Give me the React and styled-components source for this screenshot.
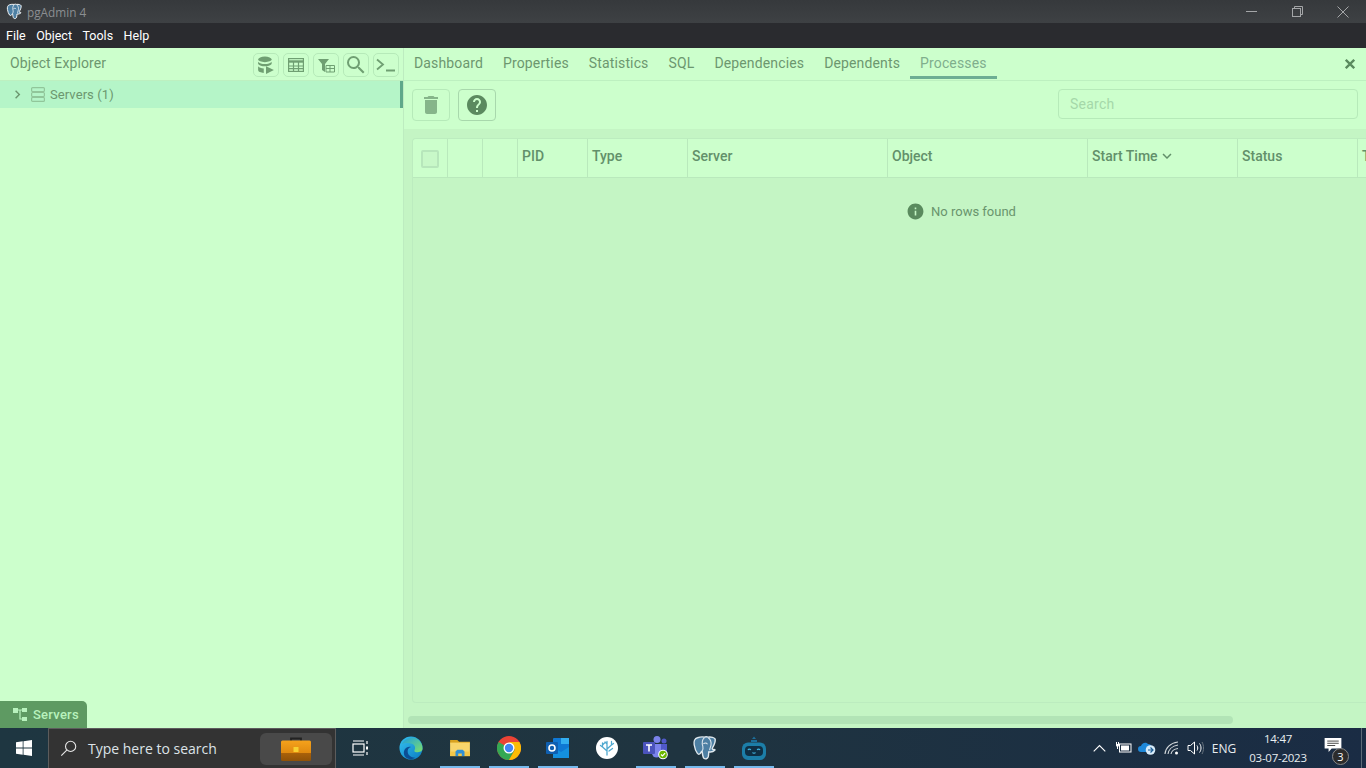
import React from "react";
import styled, { createGlobalStyle } from "styled-components";
import { MdDelete, MdHelp, MdSearch, MdInfo, MdKeyboardArrowRight, MdExpandMore } from "react-icons/md";

const Global = createGlobalStyle`
  html, body { margin: 0; padding: 0; overflow: hidden; }
  * { box-sizing: border-box; }
  #root { width: 1366px; height: 768px; }
`;

const Page = styled.div`
  width: 1366px; height: 768px; display: flex; flex-direction: column;
  font-family: Roboto, "Liberation Sans", sans-serif; overflow: hidden; background: #ccffcc;
`;
const TitleBar = styled.div`
  height: 23px; flex: none; display: flex; align-items: center;
  background: linear-gradient(#36393c, #3e4144); padding-left: 6px;
`;
const TitleText = styled.span`
  font-size: 11.8px; color: #8b8e91; margin-left: 4px;
  font-family: "Open Sans", sans-serif;
`;
const WinButtons = styled.div`margin-left: auto; display: flex; align-items: center; color: #a4a6a8;`;
const WinButton = styled.div`width: 46px; height: 23px; display: flex; align-items: center; justify-content: center;`;
const MenuBar = styled.div`
  height: 25px; flex: none; background: #2a2b2f; display: flex; align-items: center; padding-left: 6px; gap: 10.5px;
`;
const MenuItem = styled.span`color: #fff; font-size: 12.5px;`;
const Main = styled.div`flex: 1; min-height: 0; display: flex; position: relative;`;
const LeftPanel = styled.div`
  width: 404px; flex: none; border-right: 1px solid #bdecc0; display: flex; flex-direction: column; background: #ccffcc;
`;
const PanelHeader = styled.div`
  height: 33px; flex: none; display: flex; align-items: center; padding: 2px 4px 0 10px;
  border-bottom: 1px solid #bdf0c0; justify-content: space-between;
`;
const PanelTitle = styled.span`font-size: 14px; color: #6c976f; letter-spacing: .1px; margin-bottom: 4px;`;
const SmallTools = styled.div`display: flex; gap: 4px;`;
const SmallTool = styled.div`
  width: 26px; height: 24px; border: 1px solid #b6eab9; border-radius: 5px; display: flex;
  align-items: center; justify-content: center; color: #6f9f72;
`;
const TreeRow = styled.div`
  height: 27px; flex: none; background: #b5f5c8; border-right: 3px solid #5fa88a; display: flex; align-items: center;
  padding-left: 9px; color: #6c976f; font-size: 13px; gap: 5px;
`;
const TreeLabel = styled.span`letter-spacing: .08px;`;
const LeftSpacer = styled.div`flex: 1;`;
const BrowserTab = styled.div`
  position: absolute; left: 0; bottom: 0; width: 87px; height: 27px; background: #5e9a62; border-radius: 0 5px 0 0;
  display: flex; align-items: center; padding-left: 13px; gap: 6px; color: #b8f2bd; font-size: 13px; font-weight: 500; letter-spacing: .25px;
`;
const RightPanel = styled.div`flex: 1; min-width: 0; display: flex; flex-direction: column;`;
const TabBar = styled.div`
  height: 33px; flex: none; display: flex; border-bottom: 1px solid #bdf0c0; position: relative;
`;
const Tab = styled.div`
  height: 31px; padding: 1px 10px 0; display: flex; align-items: center; font-size: 14px; letter-spacing: .14px;
  color: ${p => (p.$active ? "#7fae8c" : "#6c976f")};
  border-bottom: ${p => (p.$active ? "3px solid #6dae93" : "3px solid transparent")};
`;
const TabClose = styled.div`
  position: absolute; right: 11px; top: 11px; color: #5a8a5e; display: flex;
`;
const Toolbar = styled.div`
  height: 48px; flex: none; display: flex; align-items: flex-start; padding: 8px 8px 0; gap: 8px;
`;
const ToolButton = styled.div`
  width: 38px; height: 32px; border: 1px solid ${p => (p.$on ? "#a8d8ac" : "#b6eab9")}; border-radius: 4px;
  display: flex; align-items: center; justify-content: center; color: ${p => (p.$on ? "#5b8a5f" : "#86b58a")};
`;
const SearchBox = styled.div`
  margin-left: auto; width: 300px; height: 30px; border: 1px solid #b6eab9; border-radius: 4px;
  display: flex; align-items: center; padding-left: 11px; font-size: 14px; color: #a5d8a9; letter-spacing: .25px;
`;
const GridArea = styled.div`
  flex: 1; min-height: 0; background: #c4f5c4; padding: 9px 0 0 8px; display: flex; flex-direction: column; overflow: hidden;
`;
const Table = styled.div`
  flex: 1; min-height: 0; border: 1px solid #bcecbf; border-right: none; border-radius: 4px 0 0 4px; display: flex; flex-direction: column; overflow: hidden;
`;
const HeadRow = styled.div`
  height: 39px; flex: none; display: flex; background: #ccffcc; border-bottom: 1px solid #b9e9bc;
`;
const HeadCell = styled.div`
  flex: none; width: ${p => p.$w}px; display: flex; align-items: center; padding-left: 4px; font-size: 14px; font-weight: 500;
  color: #62906a; border-right: 1px solid #b9e9bc; white-space: nowrap; overflow: hidden;
`;
const HeadLabel = styled.span`display: flex; align-items: center; padding-bottom: 4px;`;
const Check = styled.div`
  width: 18px; height: 18px; margin: 1px 0 0 4px; border: 2px solid #b7e6bb; border-radius: 2px; background: #c8f8c8;
`;
const Empty = styled.div`
  display: flex; align-items: center; justify-content: center; gap: 6px; height: 67px; color: #69946d; font-size: 13px;
  width: 1096px;
`;
const ScrollTrack = styled.div`height: 25px; flex: none; display: flex; align-items: flex-start; padding-top: 13px; margin-left: -4px;`;
const ScrollThumb = styled.div`width: 825px; height: 8px; border-radius: 4px; background: #b2e4b6;`;
const Taskbar = styled.div`
  height: 40px; flex: none; display: flex; align-items: stretch; color: #fff;
  background: linear-gradient(90deg, #1e3641, #1f3440 50%, #1a2c44);
`;
const StartButton = styled.div`width: 48px; display: flex; align-items: center; justify-content: center;`;
const SearchBar = styled.div`
  width: 288px; background: #333; border: 1px solid #5c5c5c; border-bottom: none; display: flex; align-items: center; padding: 0 3px 0 11px;
`;
const SearchText = styled.span`
  font-family: "Open Sans", sans-serif; font-size: 14px; color: #dde3e8; margin-left: 11px;
`;
const Badge = styled.div`
  margin-left: auto; width: 72px; height: 32px; border-radius: 6px; background: #494949; display: flex; align-items: center; justify-content: center;
`;
const AppSlot = styled.div`
  width: ${p => p.$w || 49}px; position: relative; display: flex; align-items: center; justify-content: center;
  ${p => p.$open && `&::after { content: ""; position: absolute; bottom: 0; left: 5px; right: 4px; height: 2px; background: #76b9ed; }`}
`;
const Tray = styled.div`margin-left: auto; display: flex; align-items: stretch;`;
const TrayIcon = styled.div`width: ${p => p.$w || 24}px; display: flex; align-items: center; justify-content: center;`;
const TrayLang = styled.div`width: 32px; margin: 0 8px 0 2px; display: flex; align-items: center; justify-content: center; font-size: 12px; font-family: "Open Sans", sans-serif; color: #e8edf0;`;
const Clock = styled.div`
  width: 60px; display: flex; flex-direction: column; align-items: center; justify-content: center; font-size: 11.5px; line-height: 19px; font-family: "Open Sans", sans-serif; color: #e8edf0; letter-spacing: -.25px; margin-right: 2px; white-space: nowrap;
`;
const Notify = styled.div`width: 46px; position: relative; display: flex; align-items: center; justify-content: center;`;
const NotifyCount = styled.div`
  position: absolute; left: 22px; top: 20px; width: 17px; height: 17px; border-radius: 50%; background: #2c2c2c; border: 1px solid #888; color: #fff; font-size: 11px;
  display: flex; align-items: center; justify-content: center; font-family: "Open Sans", sans-serif;
`;
const ShowDesktop = styled.div`width: 10px; &::before { content: ""; display: block; width: 1px; height: 40px; margin-left: 5px; background: #5c6b78; }`;

const Elephant = ({ size = 20, fill = "#336791", line = "#fff" }) => (
  <svg width={size} height={size} viewBox="0 0 24 24">
    <path d="M5 2.5C2.5 3 1.5 6 2 9c.5 3 1.5 6 3 8 1 1.2 2.3.8 3-.5.6-1 .8-1.6 1.4-1.2.3 2.5.4 5 1.6 6.2 1.3 1 3.3.6 4-1.5.4-1.5.3-3 .5-4.5 2 .4 4.3-.2 5.5-1.4.5-.6-.2-1-1.2-.8-1 .1-1.3-.4-1-1.3 1.3-2.2 3-5.5 2.6-8.2C20.800 2.500 17.500 1.500 15 2c-1-.4-2.500-.6-3.500 0C9.500 1.500 7 1.900 5 2.500z" fill={fill} stroke={line} strokeWidth="1.3" strokeLinejoin="round" />
    <path d="M11.500 2.500c-2 1.800-2.500 5-1.500 8 .4 1.500.2 3-.7 4.500M15 2.500c2 1.500 3 4 2.500 7-.3 1.700-1.200 2.800-1.200 4.500M10.500 8c1.500-.8 3-.6 3.800.5" fill="none" stroke={line} strokeWidth="1" />
  </svg>
);

const Windows = () => (
  <svg width="16" height="16" viewBox="0 0 16 16" fill="#fff">
    <path d="M0 2.300l6.700-1v6.300H0zM7.500 1.200L16 0v7.600H7.500zM0 8.400h6.700v6.300l-6.700-1zM7.500 8.400H16V16l-8.500-1.200z" />
  </svg>
);

const Briefcase = () => (
  <svg width="30" height="24" viewBox="0 0 30 24">
    <defs>
      <linearGradient id="caseFill" x1="0" y1="0" x2="0" y2="1">
        <stop offset="0" stopColor="#f5a21c" />
        <stop offset=".6" stopColor="#e08a10" />
        <stop offset=".62" stopColor="#a9610a" />
        <stop offset="1" stopColor="#8f5208" />
      </linearGradient>
    </defs>
    <path d="M10 4V1.500h10V4" fill="none" stroke="#222" strokeWidth="1.800" />
    <rect x="0" y="3.500" width="30" height="20.500" rx="1.500" fill="url(#caseFill)" />
    <rect x="12.500" y="10" width="5" height="5" fill="#f8d030" />
  </svg>
);

const EdgeIcon = () => (
  <svg width="24" height="24" viewBox="0 0 26 26">
    <defs>
      <linearGradient id="edgeA" x1="0" y1="0" x2="1" y2="1"><stop offset="0" stopColor="#35c1f1" /><stop offset="1" stopColor="#0a7cc1" /></linearGradient>
      <linearGradient id="edgeB" x1="0" y1="0" x2="1" y2="1"><stop offset="0" stopColor="#1b9de2" /><stop offset="1" stopColor="#7fe06a" /></linearGradient>
    </defs>
    <circle cx="13" cy="13" r="12.500" fill="url(#edgeA)" />
    <path d="M3 9C6 2 15 0 21 4c3 2.500 4.500 6 4.500 9.500 0 3-3 4-6.500 4-2 0-3-1-2-2.500 1-2 .5-5-3-6.500C10 7 6 7.500 3 9z" fill="url(#edgeB)" />
    <path d="M11 25c-5-1-7-6-5-10 1.500-3 5-4 7-3-3 1-4 3-3.500 6 .5 3 3.500 5.500 8 5.500-2 1.300-4.500 2-6.500 1.500z" fill="#0b4e94" />
  </svg>
);
const FolderIcon = () => (
  <svg width="22" height="18" viewBox="0 0 24 20">
    <path d="M1 1h8l2 2h12v2H1z" fill="#d9a21f" />
    <rect x="1" y="4" width="22" height="15" fill="#f8d56b" />
    <rect x="1" y="14" width="22" height="5" fill="#f3c648" />
    <path d="M7 19v-5l2-2h6l2 2v5h-3v-3h-4v3z" fill="#2f8fd6" />
  </svg>
);
const ChromeIcon = () => (
  <svg width="24" height="24" viewBox="0 0 24 24">
    <circle cx="12" cy="12" r="12" fill="#ea4335" />
    <path d="M12 12L1.600 6A12 12 0 0 0 12 24l6-10.400z" fill="#34a853" />
    <path d="M12 6h10.400A12 12 0 0 1 12 24l6-10.400z" fill="#fbbc04" />
    <circle cx="12" cy="12" r="5.500" fill="#fff" />
    <circle cx="12" cy="12" r="4.200" fill="#4285f4" />
  </svg>
);
const OutlookIcon = () => (
  <svg width="24" height="22" viewBox="0 0 24 22">
    <rect x="7" y="1" width="16" height="20" rx="1" fill="#0f78d4" />
    <rect x="15" y="1" width="8" height="6" fill="#33aef0" />
    <path d="M7 10l8 5 8-5v11H7z" fill="#1490df" />
    <rect x="0" y="5" width="12" height="12" rx="1" fill="#0f5fb0" />
    <circle cx="6" cy="11" r="3" fill="none" stroke="#fff" strokeWidth="1.600" />
  </svg>
);
const CoralIcon = () => (
  <svg width="22" height="22" viewBox="0 0 22 22">
    <circle cx="11" cy="11" r="11" fill="#fff" />
    <path d="M11 18V9M11 14L6.500 10V6M6.500 10L4.500 8.500M6.500 8L8.500 6M11 12l4.500-4V4.500M15.500 8l2-1.500M11 9V4.500M11 7L9 5M13 14l3.500-2.500" fill="none" stroke="#4fa8cf" strokeWidth="1.300" strokeLinecap="round" />
  </svg>
);
const TeamsIcon = () => (
  <svg width="26" height="24" viewBox="0 0 26 24">
    <circle cx="14" cy="3.500" r="3.500" fill="#7b83eb" />
    <circle cx="21" cy="5" r="2.500" fill="#5059c9" />
    <path d="M9 8h9v9a4.500 4.500 0 0 1-9 0z" fill="#7b83eb" />
    <path d="M18 8h6v6a3 3 0 0 1-6 0z" fill="#5059c9" />
    <rect x="0" y="6" width="12" height="12" rx="1" fill="#4b53bc" />
    <path d="M3 9h6M6 9v6.500" stroke="#fff" strokeWidth="1.600" />
    <circle cx="20" cy="18.500" r="4.800" fill="#fff" />
    <circle cx="20" cy="18.500" r="3.800" fill="#6bb700" />
    <path d="M18 18.500l1.500 1.500 2.600-2.800" stroke="#fff" strokeWidth="1.200" fill="none" />
  </svg>
);
const RobotIcon = () => (
  <svg width="24" height="26" viewBox="0 0 24 26">
    <path d="M10 4l2-2.500L14 4z" fill="#1c6f9b" />
    <rect x="9" y="5" width="6" height="2" fill="#1c6f9b" />
    <rect x="0" y="7.500" width="24" height="17.500" rx="6" fill="#1c7ea8" />
    <rect x="3" y="11" width="18" height="10" rx="4" fill="#0f2f44" />
    <path d="M6 15c.6-1.200 2-1.200 2.800 0M15.200 15c.6-1.200 2-1.200 2.800 0" stroke="#3fb5e0" strokeWidth="1.300" fill="none" />
    <path d="M10.500 17.500c.6 1 2.400 1 3 0" stroke="#3fb5e0" strokeWidth="1.200" fill="none" />
  </svg>
);

const columns = [
  { w: 35, check: true }, { w: 35 }, { w: 35 }, { w: 70, t: "PID" }, { w: 100, t: "Type" },
  { w: 200, t: "Server" }, { w: 200, t: "Object" }, { w: 150, t: "Start Time", sort: true },
  { w: 120, t: "Status" }, { w: 100, t: "T" },
];
const tabs = ["Dashboard", "Properties", "Statistics", "SQL", "Dependencies", "Dependents", "Processes"];

export default function App() {
  return (
    <Page>
      <Global />
      <TitleBar>
        <Elephant size={17} fill="#4d7fa3" />
        <TitleText>pgAdmin 4</TitleText>
        <WinButtons>
          <WinButton><svg width="11" height="11" viewBox="0 0 11 11"><path d="M0 5.500h11" stroke="currentColor" /></svg></WinButton>
          <WinButton><svg width="11" height="11" viewBox="0 0 11 11" fill="none" stroke="currentColor"><rect x=".5" y="2.500" width="8" height="8" /><path d="M2.500 2.500V.5h8v8h-2" /></svg></WinButton>
          <WinButton><svg width="12" height="12" viewBox="0 0 12 12"><path d="M.5.5l11 11M11.500.5l-11 11" stroke="currentColor" /></svg></WinButton>
        </WinButtons>
      </TitleBar>
      <MenuBar>
        {["File", "Object", "Tools", "Help"].map(m => <MenuItem key={m}>{m}</MenuItem>)}
      </MenuBar>
      <Main>
        <LeftPanel>
          <PanelHeader>
            <PanelTitle>Object Explorer</PanelTitle>
            <SmallTools>
              <SmallTool>
                <svg width="18" height="18" viewBox="0 0 16 16" fill="currentColor">
                  <ellipse cx="7" cy="3" rx="6" ry="2.500" />
                  <path d="M1 5c1 1.500 3.500 2 6 2s5-.5 6-2v2c-1 1.500-3.500 2-6 2s-5-.5-6-2zM1 9c1 1.200 2.500 1.800 5 2v4c-2.500 0-5-1-5-2.500z" />
                  <path d="M8 9l7 3.500L8 16z" />
                </svg>
              </SmallTool>
              <SmallTool>
                <svg width="16" height="14" viewBox="0 0 16 14" fill="none" stroke="currentColor" strokeWidth="1.200">
                  <rect x=".6" y=".6" width="14.800" height="12.800" />
                  <path d="M.6 3.500h14.800" strokeWidth="2.400" />
                  <path d="M.6 8h14.800M.6 10.700h14.800M5.500 3v10M10.500 3v10" />
                </svg>
              </SmallTool>
              <SmallTool>
                <svg width="17" height="15" viewBox="0 0 17 15" fill="currentColor">
                  <path d="M0 1h11L7 6v8L4 12V6z" />
                  <path d="M8 7.500h8.500V14H8z" fill="none" stroke="currentColor" />
                  <path d="M8 10.500h8.500M12 7.500V14" stroke="currentColor" />
                </svg>
              </SmallTool>
              <SmallTool><MdSearch size={24} /></SmallTool>
              <SmallTool>
                <svg width="20" height="14" viewBox="0 0 20 14" fill="none" stroke="currentColor" strokeWidth="1.800">
                  <path d="M1 1.500L7 6.500 1 11.500M10 12.500h9" />
                </svg>
              </SmallTool>
            </SmallTools>
          </PanelHeader>
          <TreeRow>
            <MdKeyboardArrowRight size={17} />
            <svg width="14" height="15" viewBox="0 0 14 15" fill="none" stroke="#91c69a" strokeWidth="1.200">
              <rect x=".6" y=".6" width="12.800" height="4" rx="1" />
              <rect x=".6" y="5.500" width="12.800" height="4" rx="1" />
              <rect x=".6" y="10.400" width="12.800" height="4" rx="1" />
            </svg>
            <TreeLabel>Servers (1)</TreeLabel>
          </TreeRow>
          <LeftSpacer />
        </LeftPanel>
        <BrowserTab>
          <svg width="14" height="13" viewBox="0 0 14 13" fill="currentColor">
            <rect x="0" y="0" width="5" height="5" />
            <rect x="9" y="0" width="5" height="4" />
            <rect x="9" y="9" width="5" height="4" />
            <path d="M5 2h4M7 2v9h2" fill="none" stroke="currentColor" strokeWidth="1.200" />
          </svg>
          Servers
        </BrowserTab>
        <RightPanel>
          <TabBar>
            {tabs.map(t => <Tab key={t} $active={t === "Processes"}>{t}</Tab>)}
            <TabClose>
              <svg width="10" height="10" viewBox="0 0 10 10" fill="none" stroke="currentColor" strokeWidth="2.300">
                <path d="M.8.8l8.400 8.400M9.200.8L.8 9.200" />
              </svg>
            </TabClose>
          </TabBar>
          <Toolbar>
            <ToolButton><MdDelete size={24} /></ToolButton>
            <ToolButton $on><MdHelp size={24} /></ToolButton>
            <SearchBox>Search</SearchBox>
          </Toolbar>
          <GridArea>
            <Table>
              <HeadRow>
                {columns.map((c, i) => (
                  <HeadCell key={i} $w={c.w}>
                    {c.check && <Check />}
                    {c.t && (
                      <HeadLabel>
                        {c.t}
                        {c.sort && <MdExpandMore size={18} />}
                      </HeadLabel>
                    )}
                  </HeadCell>
                ))}
              </HeadRow>
              <Empty><MdInfo size={19} color="#5a8a5e" /> No rows found</Empty>
            </Table>
            <ScrollTrack><ScrollThumb /></ScrollTrack>
          </GridArea>
        </RightPanel>
      </Main>
      <Taskbar>
        <StartButton><Windows /></StartButton>
        <SearchBar>
          <svg width="17" height="17" viewBox="0 0 20 20" fill="none" stroke="#e6e6e6" strokeWidth="1.300">
            <circle cx="12.500" cy="7.500" r="6" />
            <path d="M8 12l-6.500 6.500" />
          </svg>
          <SearchText>Type here to search</SearchText>
          <Badge><Briefcase /></Badge>
        </SearchBar>
        <AppSlot $w={50}>
          <svg width="16" height="16" viewBox="0 0 16 16" fill="none" stroke="#fff" strokeWidth="1.200" style={{ marginRight: 2 }}>
            <rect x="1" y="4" width="11" height="8" />
            <path d="M1 1h11M1 15h11M15 1v3M15 12v3" />
            <rect x="14" y="6.500" width="2" height="3" fill="#fff" stroke="none" />
          </svg>
        </AppSlot>
        <AppSlot><EdgeIcon /></AppSlot>
        <AppSlot $open><FolderIcon /></AppSlot>
        <AppSlot $open><ChromeIcon /></AppSlot>
        <AppSlot $open><OutlookIcon /></AppSlot>
        <AppSlot><CoralIcon /></AppSlot>
        <AppSlot $open><TeamsIcon /></AppSlot>
        <AppSlot $open><Elephant size={26} fill="#4d7fa3" line="#dfe8ee" /></AppSlot>
        <AppSlot $open><RobotIcon /></AppSlot>
        <Tray>
          <TrayIcon>
            <svg width="13" height="8" viewBox="0 0 13 8" fill="none" stroke="#fff" strokeWidth="1.100"><path d="M.7 7.300L6.500 1.500l5.800 5.800" /></svg>
          </TrayIcon>
          <TrayIcon>
            <svg width="17" height="12" viewBox="0 0 17 12" fill="#fff">
              <rect x="4.500" y="2" width="11.500" height="8" fill="none" stroke="#fff" />
              <rect x="6" y="3.500" width="8" height="5" />
              <path d="M1 0h1v2h1V0h1v3.500L3 5v2H2V5L1 3.500z" />
            </svg>
          </TrayIcon>
          <TrayIcon>
            <svg width="18" height="14" viewBox="0 0 18 14">
              <path d="M3 11a3 3 0 0 1 0-6c.5-3 5-4.500 7-2 2 0 3.500 1 3.500 3l-2 5z" fill="#1e88d9" />
              <circle cx="12.500" cy="9" r="4.800" fill="#d8ecfa" />
              <path d="M10 9h5M12.500 6.500l2.500 2.500-2.500 2.500" stroke="#1e5f96" strokeWidth="1.200" fill="none" />
            </svg>
          </TrayIcon>
          <TrayIcon $w={25}>
            <svg width="16" height="14" viewBox="0 0 16 14" fill="none" stroke="#d4d9dc" strokeWidth="1.100">
              <path d="M1 13C1.500 7 6 2 14 1M4 13c.5-4 4-8 10-9M7 13c.5-2.500 3-5 7-5.500" />
              <circle cx="12.500" cy="12" r="1.500" fill="#fff" stroke="none" />
            </svg>
          </TrayIcon>
          <TrayIcon $w={22}>
            <svg width="17" height="14" viewBox="0 0 17 14" fill="none" stroke="#fff" strokeWidth="1">
              <path d="M1 4.500h2.500L7.500 1v12L3.500 9.500H1z" />
              <path d="M10 4.500c1 1.500 1 3.500 0 5M12.500 2.500c2 2.500 2 6.500 0 9" />
              <path d="M15 1c2 3.500 2 8.500 0 12" stroke="#6a7680" />
            </svg>
          </TrayIcon>
          <TrayLang>ENG</TrayLang>
          <Clock><span>14:47</span><span>03-07-2023</span></Clock>
          <Notify>
            <svg width="18" height="15" viewBox="0 0 19 17" style={{ marginTop: -6 }}>
              <path d="M0 0h19v12H8l-3.500 4v-4H0z" fill="#fff" />
              <path d="M3 3.500h13M3 6h13M3 8.500h9" stroke="#333" strokeWidth="1" />
            </svg>
            <NotifyCount>3</NotifyCount>
          </Notify>
          <ShowDesktop />
        </Tray>
      </Taskbar>
    </Page>
  );
}
